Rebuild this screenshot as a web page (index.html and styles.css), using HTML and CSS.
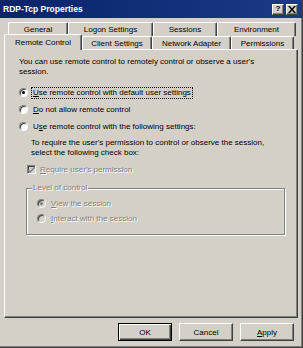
FILE: index.html
```html
<!DOCTYPE html>
<html>
<head>
<meta charset="utf-8">
<link rel="stylesheet" href="styles.css">
</head>
<body>
<div class="window">
  <div class="titlebar">
    <span class="title">RDP-Tcp Properties</span>
    <div class="caption-btns">
      <span class="cbtn help">?</span>
      <span class="cbtn close"><svg width="8" height="7" viewBox="0 0 8 7"><path d="M0 0h2l2 2.5L6 0h2L5 3.5 8 7H6L4 4.5 2 7H0l3-3.5z" fill="#000"/></svg></span>
    </div>
  </div>
  <div class="tabs">
    <div class="tabrow back">
      <div class="tab t-general">General</div>
      <div class="tab t-logon">Logon Settings</div>
      <div class="tab t-sessions">Sessions</div>
      <div class="tab t-env">Environment</div>
    </div>
    <div class="tabrow front">
      <div class="tab selected t-remote">Remote Control</div>
      <div class="tab t-client">Client Settings</div>
      <div class="tab t-net">Network Adapter</div>
      <div class="tab t-perm">Permissions</div>
    </div>
  </div>
  <div class="panel">
    <p class="intro">You can use remote control to remotely control or observe a user's<br>session.</p>
    <div class="options">
      <div class="radio"><span class="rb checked"></span><span class="lbl focus"><u>U</u>se remote control with default user settings</span></div>
      <div class="radio"><span class="rb"></span><span class="lbl"><u>D</u>o not allow remote control</span></div>
      <div class="radio"><span class="rb"></span><span class="lbl">U<u>s</u>e remote control with the following settings:</span></div>
    </div>
    <p class="desc">To require the user's permission to control or observe the session,<br>select the following check box:</p>
    <div class="check disabled"><span class="cb"><svg width="7" height="7" viewBox="0 0 7 7"><path d="M0 3l2 2 5-5v2L2 7 0 5z" fill="#808080"/></svg></span><span class="lbl"><u>R</u>equire user's permission</span></div>
    <div class="group">
      <span class="legend">Level of control</span>
      <div class="radio disabled"><span class="rb checked"></span><span class="lbl"><u>V</u>iew the session</span></div>
      <div class="radio disabled"><span class="rb"></span><span class="lbl"><u>I</u>nteract with the session</span></div>
    </div>
  </div>
  <div class="footer">
    <button class="btn default">OK</button>
    <button class="btn">Cancel</button>
    <button class="btn"><u>A</u>pply</button>
  </div>
</div>
</body>
</html>
```

FILE: styles.css
```css
html, body {
  margin: 0;
  padding: 0;
  background: #d4d0c8;
}
.window {
  width: 303px;
  height: 348px;
  box-sizing: border-box;
  background: #d4d0c8;
  border-right: 1px solid #404040;
  border-bottom: 1px solid #404040;
  box-shadow: inset -1px -1px 0 #808080;
  font-family: "Liberation Sans", Arial, sans-serif;
  font-size: 8px;
  color: #000;
  display: flex;
  flex-direction: column;
}
.titlebar {
  height: 18px;
  background: linear-gradient(90deg, #0a246a 0%, #13307a 60%, #1c3a84 100%);
  display: flex;
  align-items: center;
  justify-content: space-between;
  padding: 0 4px 0 3px;
}
.title {
  color: #fff;
  font-weight: bold;
  font-size: 8.5px;
}
.caption-btns {
  display: flex;
  gap: 2px;
}
.cbtn {
  width: 12px;
  height: 11px;
  box-sizing: border-box;
  background: #d4d0c8;
  border-top: 1px solid #fff;
  border-left: 1px solid #fff;
  border-right: 1px solid #404040;
  border-bottom: 1px solid #404040;
  box-shadow: inset -1px -1px 0 #808080;
  display: flex;
  align-items: center;
  justify-content: center;
  font-weight: bold;
  font-size: 8px;
  line-height: 1;
}
.tabs {
  padding-top: 4px;
  display: flex;
  flex-direction: column;
}
.tabrow {
  display: flex;
  align-items: flex-end;
}
.tabrow.back {
  height: 14px;
  padding-left: 8px;
}
.tabrow.front {
  height: 13px;
  padding-left: 4px;
  position: relative;
  z-index: 1;
}
.tab {
  box-sizing: border-box;
  height: 100%;
  background: #d4d0c8;
  border-top: 1px solid #fff;
  border-left: 1px solid #fff;
  border-right: 1px solid #404040;
  border-radius: 2px 2px 0 0;
  box-shadow: inset -1px 0 0 #808080;
  display: flex;
  align-items: center;
  justify-content: center;
  white-space: nowrap;
}
.tab.selected {
  height: 16px;
  margin-bottom: -1px;
}
.t-general { width: 60px; }
.t-logon { width: 85px; }
.t-sessions { width: 64px; }
.t-env { width: 79px; }
.t-remote { width: 78px; }
.t-client { width: 70px; }
.t-net { width: 79px; }
.t-perm { width: 63px; }
.panel {
  margin-left: 4px;
  width: 294px;
  height: 269px;
  box-sizing: border-box;
  border-top: 1px solid #fff;
  border-left: 1px solid #fff;
  border-right: 1px solid #404040;
  border-bottom: 1px solid #404040;
  box-shadow: inset -1px -1px 0 #808080;
  padding: 7px 0 0 14px;
}
p {
  margin: 0;
  line-height: 10px;
}
.options {
  margin-top: 7px;
  display: flex;
  flex-direction: column;
}
.radio, .check {
  display: flex;
  align-items: center;
  height: 17px;
}
.rb {
  width: 9px;
  height: 9px;
  box-sizing: border-box;
  border-radius: 50%;
  background: #fff;
  border: 1px solid;
  border-color: #808080 #fff #fff #808080;
  box-shadow: inset 1px 1px 0 #404040;
  display: flex;
  align-items: center;
  justify-content: center;
  flex: none;
}
.rb.checked::after {
  content: "";
  width: 3px;
  height: 3px;
  border-radius: 50%;
  background: #000;
}
.radio .lbl {
  margin-left: 4px;
  padding: 0 1px;
  line-height: 10px;
}
.focus {
  outline: 1px dotted #000;
}
.desc {
  margin-top: 3px;
  padding-left: 12px;
}
.check {
  margin-top: 4px;
  height: 14px;
  padding-left: 8px;
}
.cb {
  width: 9px;
  height: 9px;
  box-sizing: border-box;
  border: 1px solid;
  border-color: #808080 #fff #fff #808080;
  box-shadow: inset 1px 1px 0 #404040;
  background: #d4d0c8;
  display: flex;
  align-items: center;
  justify-content: center;
}
.check .lbl {
  margin-left: 4px;
}
.disabled .lbl, .legend {
  color: #808080;
  text-shadow: 1px 1px 0 #fff;
}
.disabled .rb {
  background: #d4d0c8;
}
.disabled .rb.checked::after {
  background: #808080;
}
.group {
  position: relative;
  margin: 12px 0 0 7px;
  width: 259px;
  height: 47px;
  box-sizing: border-box;
  border: 1px solid #808080;
  box-shadow: inset 1px 1px 0 #fff, 1px 1px 0 #fff;
  padding: 7px 0 0 10px;
}
.legend {
  position: absolute;
  top: -6px;
  left: 5px;
  padding: 0 1px;
  background: #d4d0c8;
  line-height: 10px;
}
.group .radio {
  height: 15px;
}
.footer {
  display: flex;
  justify-content: flex-end;
  gap: 7px;
  padding: 5px 8px 0 0;
}
.btn {
  width: 54px;
  height: 18px;
  box-sizing: border-box;
  background: #d4d0c8;
  font-family: "Liberation Sans", Arial, sans-serif;
  font-size: 8px;
  color: #000;
  border-top: 1px solid #fff;
  border-left: 1px solid #fff;
  border-right: 1px solid #404040;
  border-bottom: 1px solid #404040;
  box-shadow: inset -1px -1px 0 #808080;
  padding: 0;
}
.btn.default {
  border: 1px solid #000;
  box-shadow: inset 1px 1px 0 #fff, inset -1px -1px 0 #404040, inset -2px -2px 0 #808080;
}
```
